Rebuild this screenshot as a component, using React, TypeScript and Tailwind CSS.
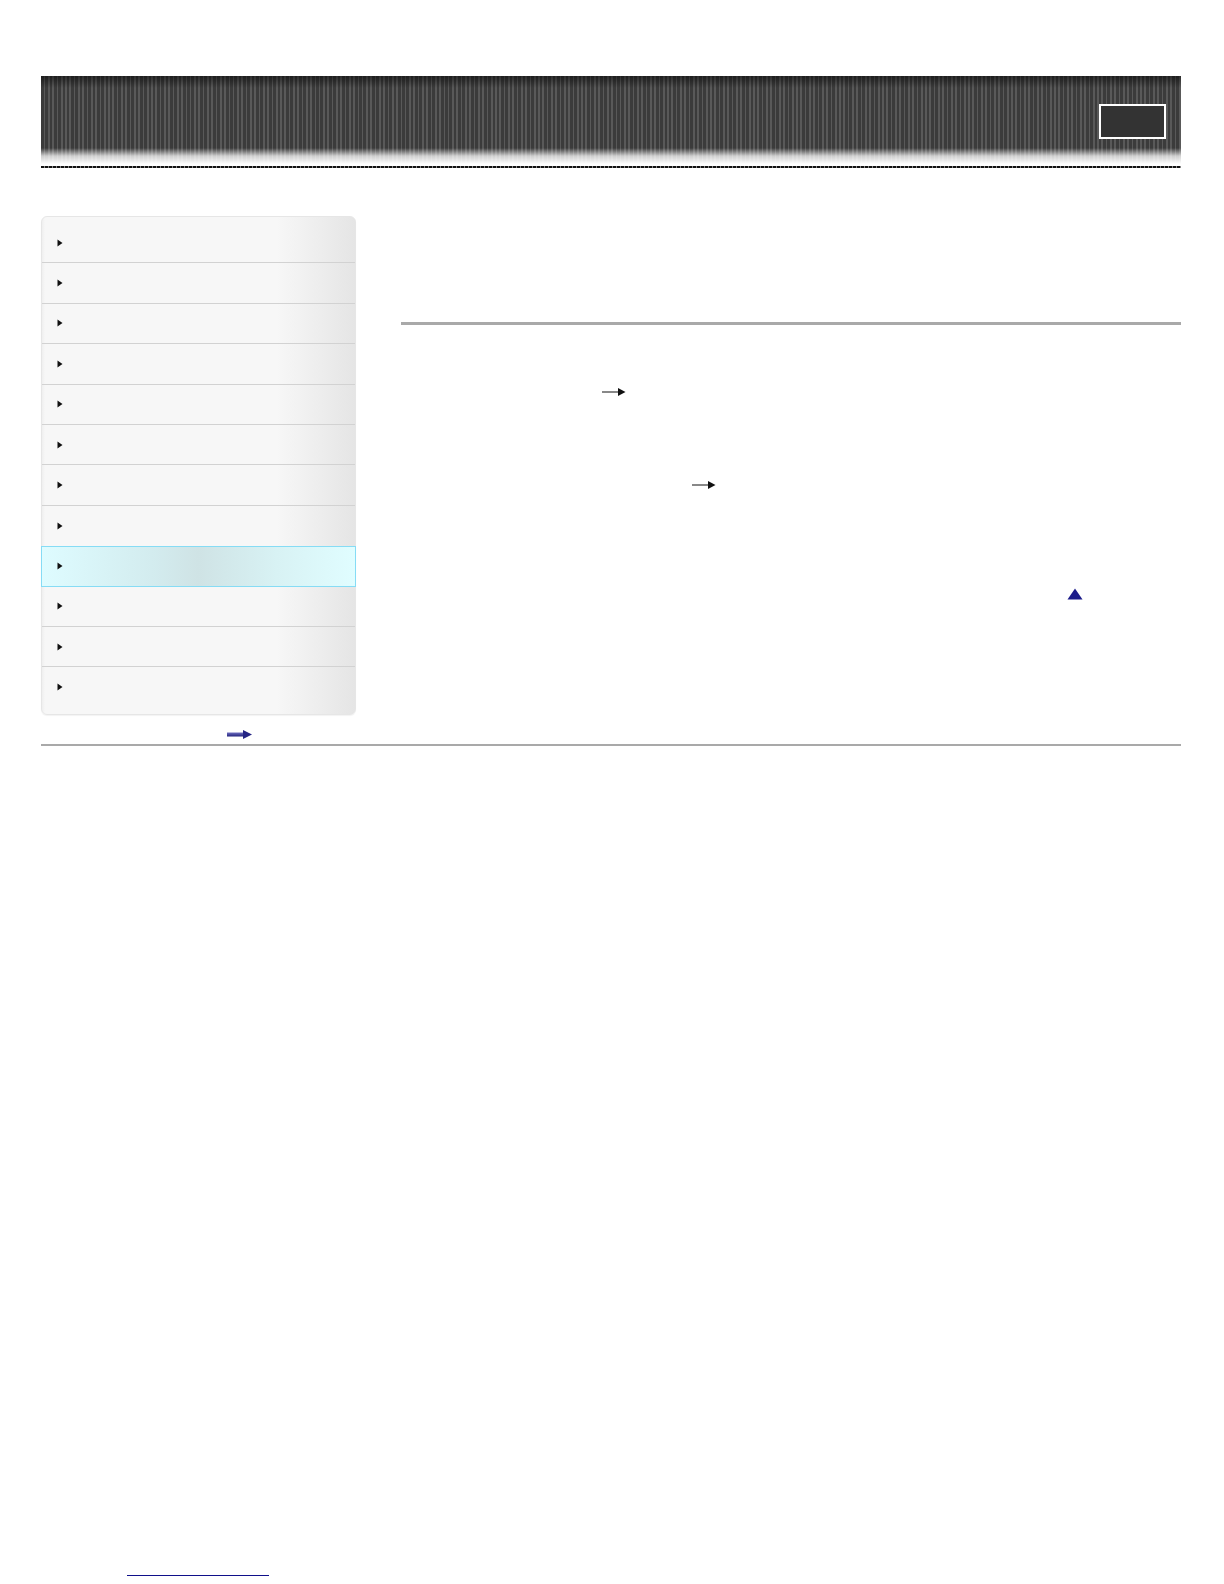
import React from "react";

const rows = Array.from({ length: 12 }, (_, i) => i);
const ACTIVE = 8;

function Caret() {
  return (
    <svg width="6" height="8" viewBox="0 0 6 8" className="shrink-0">
      <path d="M0.5 0.5 L5.5 4 L0.5 7.5 Z" fill="#111" />
    </svg>
  );
}

function ThinArrow() {
  return (
    <svg width="24" height="10" viewBox="0 0 24 10">
      <line x1="0" y1="5" x2="17" y2="5" stroke="#555" strokeWidth="1.4" />
      <path d="M16 1 L23.5 5 L16 9 Z" fill="#111" />
    </svg>
  );
}

function BlueArrow() {
  return (
    <svg width="25" height="9" viewBox="0 0 25 9">
      <defs>
        <linearGradient id="ba" x1="0" y1="0" x2="0" y2="1">
          <stop offset="0" stopColor="#6f6fc0" />
          <stop offset="1" stopColor="#23237e" />
        </linearGradient>
      </defs>
      <rect x="0" y="2.5" width="17" height="4" fill="url(#ba)" />
      <path d="M16 0 L25 4.5 L16 9 Z" fill="#262685" />
    </svg>
  );
}

export default function App() {
  return (
    <div className="min-h-[1584px] bg-white font-['Liberation_Sans',Arial,sans-serif]">
      <div className="pl-[41px] pr-[43px] pt-[76px]">
        {/* header */}
        <div className="relative h-[90px] bg-[linear-gradient(to_bottom,rgba(0,0,0,0.5)_0px,rgba(0,0,0,0)_12px,rgba(255,255,255,0)_72px,rgba(255,255,255,0.75)_80px,#fff_88px),repeating-linear-gradient(to_right,#3b3b3b_0px,#3b3b3b_2.6px,#595959_2.6px,#595959_4.3px)]">
          <div className="absolute right-[15px] top-[28px] h-[35px] w-[67px] border-2 border-white bg-[#333]" />
        </div>
        <div className="h-[2px] bg-[repeating-linear-gradient(to_right,#111_0px,#111_3px,#888_3px,#888_4px)]" />

        {/* body */}
        <div className="mt-[48px] flex items-start gap-[45px]">
          <div className="w-[315px] shrink-0">
            <div className="rounded-[6px] border border-[#e6e6e6] bg-[linear-gradient(to_right,#efefef_0px,#f7f7f7_3px,#f7f7f7_75%,#e5e5e5_100%)] pt-[6px] pb-[6px] shadow-[0_1px_1px_rgba(0,0,0,0.05)]">
              {rows.map((i) => (
                <div
                  key={i}
                  className={
                    i === ACTIVE
                      ? "flex h-[40.4px] items-center border border-[#86dcf5] bg-[linear-gradient(to_right,#defcff_0%,#d3ecef_35%,#cfe3e5_50%,#d8f2f4_75%,#e0fdff_100%)] pl-[15px] -mx-px"
                      : i === ACTIVE - 1 || i === rows.length - 1
                        ? "flex h-[40.4px] items-center pl-[15px]"
                        : "flex h-[40.4px] items-center border-b border-[#d2d2d2] pl-[15px]"
                  }
                >
                  <Caret />
                </div>
              ))}
            </div>
            <div className="mt-[15px] flex pl-[186px]">
              <BlueArrow />
            </div>
          </div>

          <div className="flex-1">
            <div className="h-[106px]" />
            <div className="h-[3px] bg-[#a9a9a9]" />
            <div className="mt-[62px] pl-[201px]">
              <ThinArrow />
            </div>
            <div className="mt-[83px] pl-[291px]">
              <ThinArrow />
            </div>
            <div className="mt-[98px] flex pl-[666px]">
              <svg width="16" height="12" viewBox="0 0 16 12">
                <path d="M8 0.5 L15.5 11.5 L0.5 11.5 Z" fill="#1c1c8a" />
              </svg>
            </div>
          </div>
        </div>

        <div className="mt-[5px] h-[2px] bg-[#a9a9a9]" />
      </div>

      <div className="ml-[127px] mt-[829px] h-px w-[142px] bg-[#10108a]" />
    </div>
  );
}
